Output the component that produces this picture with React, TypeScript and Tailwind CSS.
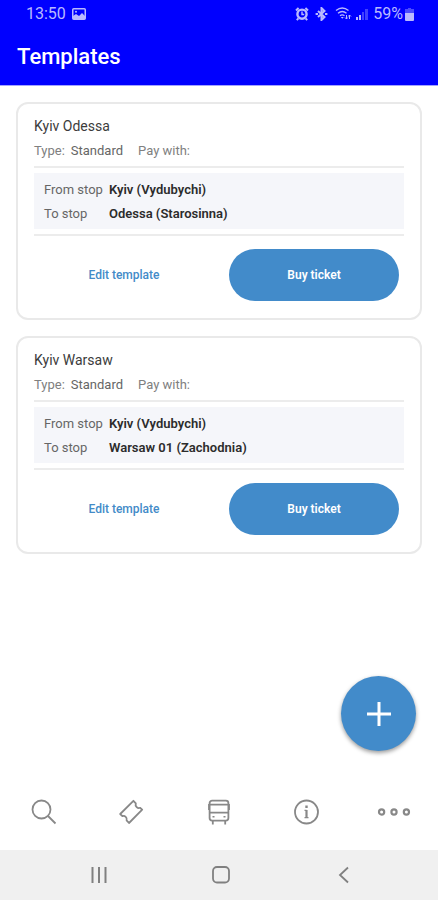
import { useState } from "react";

type Template = {
  id: number;
  name: string;
  type: string;
  from: string;
  to: string;
};

const TEMPLATES: Template[] = [
  {
    id: 1,
    name: "Kyiv Odessa",
    type: "Standard",
    from: "Kyiv (Vydubychi)",
    to: "Odessa (Starosinna)",
  },
  {
    id: 2,
    name: "Kyiv Warsaw",
    type: "Standard",
    from: "Kyiv (Vydubychi)",
    to: "Warsaw 01 (Zachodnia)",
  },
];

/* ================= STATUS BAR ================= */
function StatusBar() {
  return (
    <div className="flex h-7 items-center justify-between pr-6 pl-[26px] text-[16px] leading-7 text-[#b9b9ff]">
      <div className="flex items-center gap-[6px]">
        <span>13:50</span>
        <svg width="14" height="12" viewBox="0 0 14 12" fill="none">
          <rect x="0.75" y="0.75" width="12.5" height="10.5" rx="1" stroke="currentColor" strokeWidth="1.5" />
          <path d="M1 11V8l3-2 3 2 3-3 3 3v3H1z" fill="currentColor" />
          <circle cx="4" cy="3.8" r="1" fill="currentColor" />
        </svg>
      </div>

      <div className="flex items-center">
        {/* alarm */}
        <svg className="mr-[6px]" width="14" height="14" viewBox="0 0 14 14" fill="none" stroke="currentColor">
          <circle cx="7" cy="7.2" r="4.6" strokeWidth="2.4" />
          <path d="M7 4.5v3h2.2" strokeWidth="1.4" />
          <path d="M1 3.4 3.6 1M13 3.4 10.4 1M3.4 11.4 1.8 13.2M10.6 11.4l1.6 1.8" strokeWidth="2" />
        </svg>
        {/* bluetooth */}
        <svg className="mr-[7px]" width="13" height="14" viewBox="0 0 13 14" fill="none" stroke="currentColor">
          <path d="M3 4l6.5 6L6.5 13V1l3 3L3 10" strokeWidth="2" />
          <path d="M0.6 7h2.4M10 7h2.4" strokeWidth="2.2" />
        </svg>
        {/* wifi */}
        <svg className="mr-1" width="17" height="14" viewBox="0 0 17 14" fill="none" stroke="currentColor">
          <path d="M1 3.6c4-3.3 8.5-3.3 12.5 0M3 6.2c2.7-2.2 5.8-2.2 8.5 0M5 8.7c1.5-1.2 3-1.2 4.5 0" strokeWidth="1.3" />
          <path d="M5.8 10h3l-1.5 1.8z" fill="currentColor" stroke="none" />
          <path d="M11.5 12V8M10 10.5l1.5 1.5 1.2-1.5M14.5 12V8M13.3 9.5l1.2-1.5L16 9.5" strokeWidth="1" />
        </svg>
        {/* signal */}
        <svg className="mr-[5px]" width="12" height="14" viewBox="0 0 12 14" fill="currentColor">
          <path d="M0 10h2v3H0zM3 8h2v5H3z" />
          <path d="M6 5h2v8H6zM9 2h3v11H9z" opacity="0.35" />
        </svg>
        <span>59%</span>
        <svg className="ml-[2px]" width="9" height="13" viewBox="0 0 9 13" fill="currentColor">
          <path d="M3 0h3v1h3v4H0V1h3z" opacity="0.4" />
          <path d="M0 5h9v7a1 1 0 0 1-1 1H1a1 1 0 0 1-1-1z" />
        </svg>
      </div>
    </div>
  );
}

/* ================= TEMPLATE CARD ================= */
function TemplateCard({ template }: { template: Template }) {
  return (
    <article className="rounded-xl border-2 border-[#e9e9e9] bg-white px-4 pt-[10px] pb-[17px]">
      <h2 className="text-[14px] leading-6 text-[#3c3c3c]">{template.name}</h2>
      <p className="mt-px flex text-[13px] leading-6 text-[#808080]">
        <span>Type:</span>
        <span className="ml-[6px] text-[#666666]">{template.type}</span>
        <span className="ml-[15px]">Pay with:</span>
      </p>

      <div className="mt-[3px] border-y-2 border-[#ececec] py-[5px]">
        <dl className="grid grid-cols-[65px_1fr] bg-[#f5f6fa] px-[10px] pt-[5px] pb-[3px] text-[13px] leading-6">
          <dt className="text-[#666666]">From stop</dt>
          <dd className="font-semibold text-[#2c2c2c]">{template.from}</dd>
          <dt className="text-[#666666]">To stop</dt>
          <dd className="font-semibold text-[#2c2c2c]">{template.to}</dd>
        </dl>
      </div>

      <div className="mt-[13px] grid grid-cols-2 gap-5 px-[5px] text-[12px]">
        <button type="button" className="h-[52px] rounded-full font-medium text-[#438bc8]">
          Edit template
        </button>
        <button type="button" className="h-[52px] rounded-full bg-[#428bca] font-semibold text-white">
          Buy ticket
        </button>
      </div>
    </article>
  );
}

/* ================= TAB ICONS ================= */
const TABS = [
  {
    label: "Search",
    icon: (
      <>
        <circle cx="10.5" cy="10.5" r="9" />
        <path d="M17 17l7.5 7.5" />
      </>
    ),
  },
  {
    label: "Tickets",
    icon: (
      <path
        d="M15.4 1.8 2.2 15l2.2 2.2C6.6 16 9.6 18.6 8.6 21.4L11 24 24.2 10.6 22 8.8C19.8 10 16.8 7.4 17.8 4.4z"
        strokeLinejoin="round"
      />
    ),
  },
  {
    label: "Buses",
    icon: (
      <>
        <rect x="3.6" y="1.6" width="18.8" height="20" rx="2.5" />
        <path d="M3.6 5.6h18.8M3.6 13.6h18.8M3 5v6M23 5v6M6.8 22v3.4M19.2 22v3.4" />
        <path d="M6.5 17.8h2M17.5 17.8h2" strokeWidth="1.4" />
      </>
    ),
  },
  {
    label: "Information",
    icon: (
      <>
        <circle cx="12.5" cy="13" r="11.5" />
        <path d="M12.5 11v8" strokeWidth="2.2" />
        <path d="M10.5 11.4h2M10.5 18.6h4" strokeWidth="1.2" />
        <path d="M12.5 6.5v2.5" strokeWidth="2.4" />
      </>
    ),
  },
];

function TabBar({ active, onSelect }: { active: string; onSelect: (label: string) => void }) {
  return (
    <nav className="grid h-[76px] grid-cols-5 bg-white text-[#888888]" aria-label="Main">
      {TABS.map(({ label, icon }) => (
        <button
          key={label}
          type="button"
          aria-label={label}
          aria-pressed={active === label}
          onClick={() => onSelect(label)}
          className="flex items-center justify-center"
        >
          <svg width="26" height="26" viewBox="0 0 26 26" fill="none" stroke="currentColor" strokeWidth="1.8">
            {icon}
          </svg>
        </button>
      ))}
      <button
        type="button"
        aria-label="More"
        aria-pressed={active === "More"}
        onClick={() => onSelect("More")}
        className="flex items-center justify-center"
      >
        <svg width="34" height="10" viewBox="0 0 34 10" fill="none" stroke="currentColor" strokeWidth="2.2">
          <circle cx="4.6" cy="5" r="2.6" />
          <circle cx="17" cy="5" r="2.6" />
          <circle cx="29.4" cy="5" r="2.6" />
        </svg>
      </button>
    </nav>
  );
}

/* ================= SYSTEM BAR ================= */
function SystemBar() {
  return (
    <div className="flex h-[50px] items-center justify-center gap-[97px] bg-[#f0f0f0] pl-1 text-[#808080]">
      <button type="button" aria-label="Recent apps">
        <svg width="26" height="20" viewBox="0 0 26 20" fill="none" stroke="currentColor" strokeWidth="2">
          <path d="M7.5 2v16M14 2v16M20.5 2v16" />
        </svg>
      </button>
      <button type="button" aria-label="Home">
        <svg width="26" height="20" viewBox="0 0 26 20" fill="none" stroke="currentColor" strokeWidth="1.8">
          <rect x="5" y="2" width="16" height="15.5" rx="4" />
        </svg>
      </button>
      <button type="button" aria-label="Back">
        <svg width="26" height="20" viewBox="0 0 26 20" fill="none" stroke="currentColor" strokeWidth="1.8">
          <path d="M17 2.5 9 10l8 7.5" />
        </svg>
      </button>
    </div>
  );
}

export default function App() {
  const [tab, setTab] = useState("More");

  return (
    <div className="flex min-h-screen flex-col bg-white font-[Roboto,sans-serif]">
      <header className="border-b border-[#a3a3ff] bg-[#0000ff]">
        <StatusBar />
        <h1 className="px-[17px] pt-[13px] pb-3 text-[22px] leading-8 font-medium text-white">
          Templates
        </h1>
      </header>

      <main className="relative flex flex-1 flex-col gap-4 px-4 pt-4">
        {TEMPLATES.map((template) => (
          <TemplateCard key={template.id} template={template} />
        ))}

        {/* floating action button, sits over the list */}
        <button
          type="button"
          aria-label="Add template"
          className="absolute right-[22px] bottom-[23px] flex size-[75px] items-center justify-center rounded-full bg-[#428bca] text-white shadow-[0_2px_4px_rgba(0,0,0,0.4)]"
        >
          <svg width="26" height="26" viewBox="0 0 26 26" fill="none" stroke="currentColor" strokeWidth="3">
            <path d="M13 1v24M1 13h24" />
          </svg>
        </button>
      </main>

      <TabBar active={tab} onSelect={setTab} />
      <SystemBar />
    </div>
  );
}
